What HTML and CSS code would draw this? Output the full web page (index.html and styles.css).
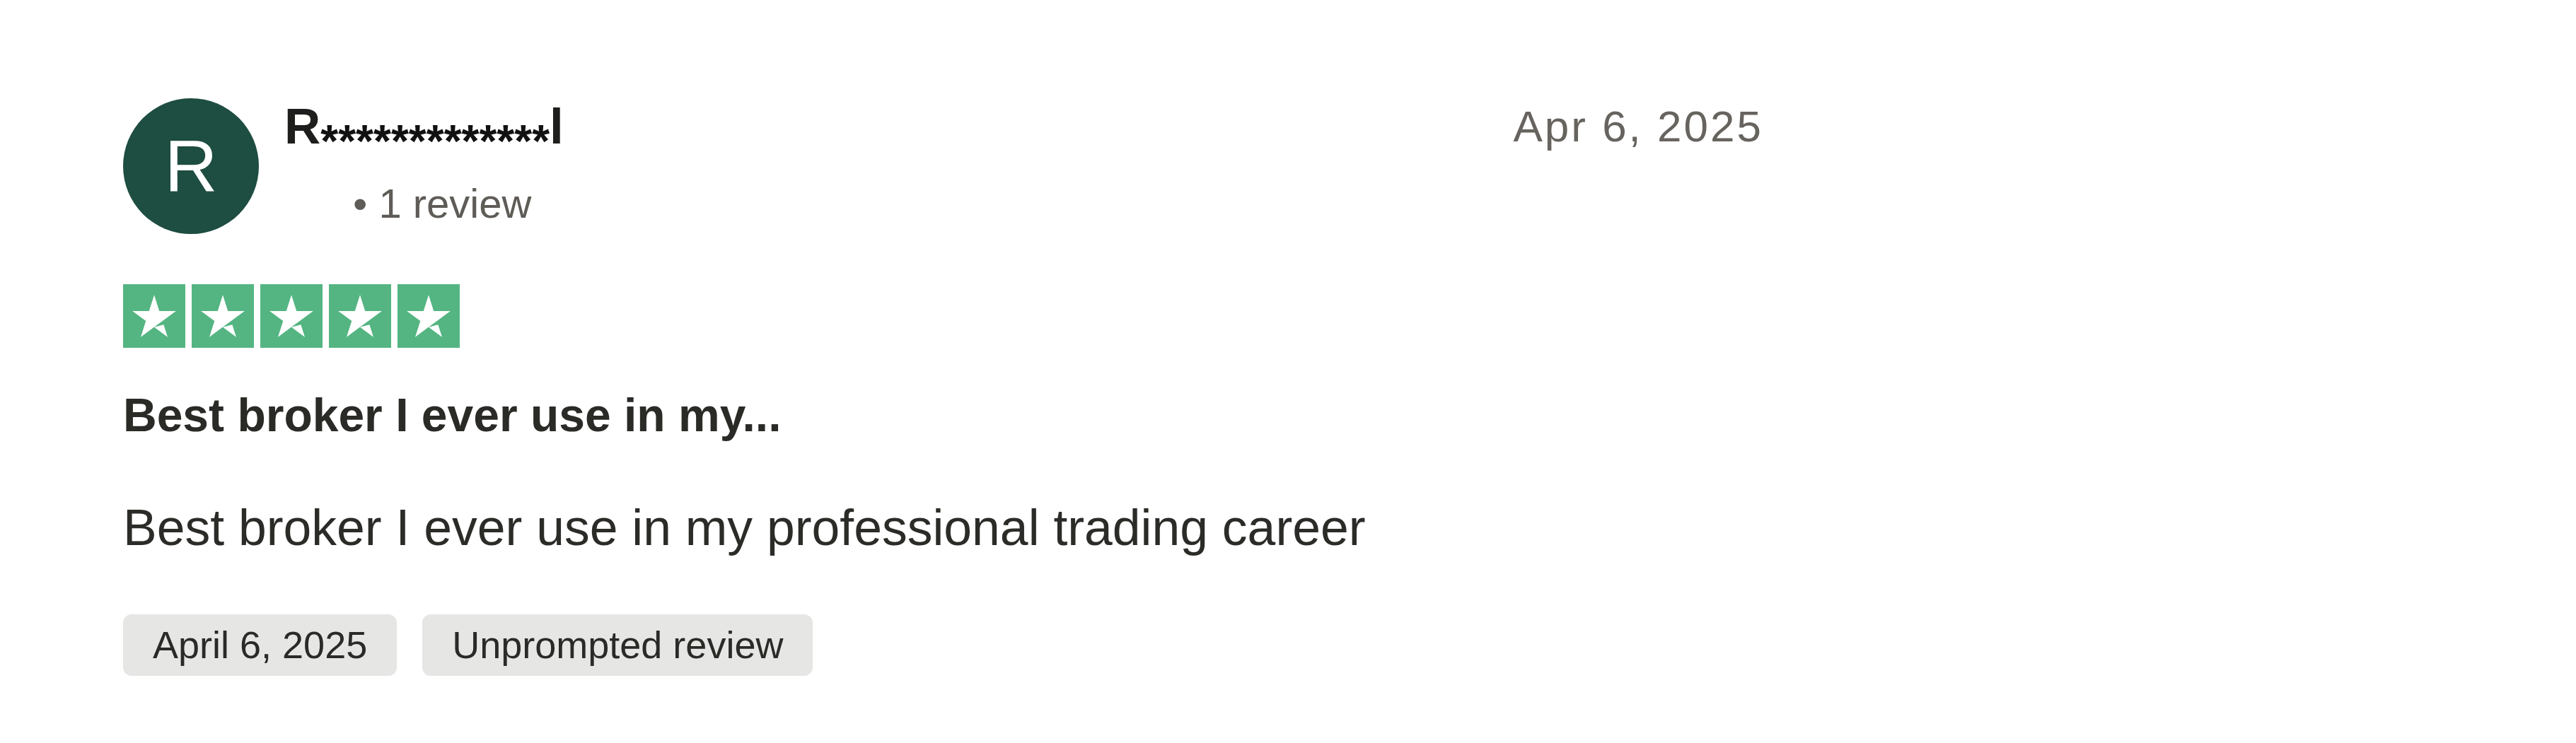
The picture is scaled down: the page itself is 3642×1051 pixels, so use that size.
FILE: index.html
```html
<!DOCTYPE html>
<html lang="en">
<head>
    <meta charset="UTF-8">
    <meta name="viewport" content="width=device-width, initial-scale=1.0">
    <title>Review</title>
    <link rel="stylesheet" href="styles.css">
</head>
<body>
    <!-- Review Card -->
    <article class="review-card">
        <!-- Header -->
        <div class="review-header">
            <div class="consumer">
                <div class="avatar">R</div>
                <div class="consumer-info">
                    <div class="consumer-name">R<span class="mask">*************</span>l</div>
                    <div class="consumer-meta"><span class="dot">&bull;</span> 1 review</div>
                </div>
            </div>
            <time class="review-date">Apr 6, 2025</time>
        </div>

        <!-- Stars -->
        <div class="stars">
            <svg class="star" viewBox="0 0 96 96" preserveAspectRatio="none"><rect width="96" height="96" fill="#54b582"/><path d="M48 64.7L62.6 61l6.1 18.8zm33.6-24.3H55.9L48 16.2l-7.9 24.2H14.4l20.8 15-7.9 24.2 20.8-15 12.8-9.2 20.7-15z" fill="#fff"/></svg>
            <svg class="star" viewBox="0 0 96 96" preserveAspectRatio="none"><rect width="96" height="96" fill="#54b582"/><path d="M48 64.7L62.6 61l6.1 18.8zm33.6-24.3H55.9L48 16.2l-7.9 24.2H14.4l20.8 15-7.9 24.2 20.8-15 12.8-9.2 20.7-15z" fill="#fff"/></svg>
            <svg class="star" viewBox="0 0 96 96" preserveAspectRatio="none"><rect width="96" height="96" fill="#54b582"/><path d="M48 64.7L62.6 61l6.1 18.8zm33.6-24.3H55.9L48 16.2l-7.9 24.2H14.4l20.8 15-7.9 24.2 20.8-15 12.8-9.2 20.7-15z" fill="#fff"/></svg>
            <svg class="star" viewBox="0 0 96 96" preserveAspectRatio="none"><rect width="96" height="96" fill="#54b582"/><path d="M48 64.7L62.6 61l6.1 18.8zm33.6-24.3H55.9L48 16.2l-7.9 24.2H14.4l20.8 15-7.9 24.2 20.8-15 12.8-9.2 20.7-15z" fill="#fff"/></svg>
            <svg class="star" viewBox="0 0 96 96" preserveAspectRatio="none"><rect width="96" height="96" fill="#54b582"/><path d="M48 64.7L62.6 61l6.1 18.8zm33.6-24.3H55.9L48 16.2l-7.9 24.2H14.4l20.8 15-7.9 24.2 20.8-15 12.8-9.2 20.7-15z" fill="#fff"/></svg>
        </div>

        <!-- Content -->
        <h2 class="review-title">Best broker I ever use in my...</h2>
        <p class="review-text">Best broker I ever use in my professional trading career</p>

        <!-- Tags -->
        <div class="review-tags">
            <span class="tag">April 6, 2025</span>
            <span class="tag">Unprompted review</span>
        </div>
    </article>
</body>
</html>
```

FILE: styles.css
```css
* {
    margin: 0;
    padding: 0;
    box-sizing: border-box;
    font-family: "Liberation Sans", Arial, sans-serif;
}

body {
    background-color: #ffffff;
    width: 3642px;
    min-height: 1051px;
}

/* Review Card */
.review-card {
    width: 2493px;
    padding: 139px 0 0 174px;
}

/* Header */
.review-header {
    display: flex;
    justify-content: space-between;
    align-items: flex-start;
}

.consumer {
    display: flex;
    align-items: flex-start;
    gap: 36px;
}

.avatar {
    width: 192px;
    height: 192px;
    border-radius: 50%;
    background-color: #1e4d41;
    color: #ffffff;
    font-size: 104px;
    display: flex;
    align-items: center;
    justify-content: center;
}

.consumer-name {
    font-size: 71px;
    font-weight: bold;
    line-height: 80px;
    color: #1e1e1c;
}

.consumer-name .mask {
    font-size: 64px;
    font-weight: bold;
    line-height: 0;
    vertical-align: -0.3em;
    color: #111111;
}

.consumer-meta {
    margin-top: 37px;
    margin-left: 97px;
    font-size: 58px;
    line-height: 64px;
    color: #5f5c57;
}

.review-date {
    font-size: 62px;
    line-height: 80px;
    letter-spacing: 3px;
    color: #67645f;
}

/* Stars */
.stars {
    display: flex;
    gap: 9px;
    margin-top: 71px;
}

.star {
    width: 88px;
    height: 90px;
    display: block;
}

/* Content */
.review-title {
    margin-top: 55px;
    font-size: 66px;
    font-weight: bold;
    line-height: 80px;
    color: #2a2a27;
}

.review-text {
    margin-top: 77px;
    font-size: 71.5px;
    line-height: 84px;
    color: #2b2b28;
}

/* Tags */
.review-tags {
    display: flex;
    gap: 36px;
    margin-top: 81px;
}

.tag {
    background-color: #e6e6e5;
    border-radius: 12px;
    padding: 12px 42px;
    font-size: 54px;
    line-height: 63px;
    color: #2a2a27;
}
```
